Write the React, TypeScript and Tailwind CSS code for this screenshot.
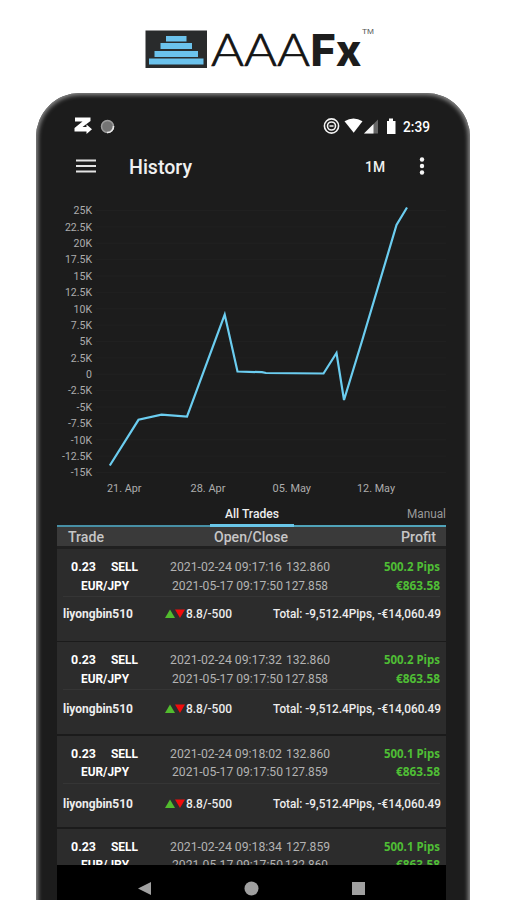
import type { ReactNode } from "react";

type Trade = {
  opened: string;
  openPrice: string;
  closed: string;
  closePrice: string;
  pips: string;
  footerClass: string;
};

const TRADES: Trade[] = [
  { opened: "2021-02-24 09:17:16", openPrice: "132.860", closed: "2021-05-17 09:17:50", closePrice: "127.858", pips: "500.2 Pips", footerClass: "pt-[9px]" },
  { opened: "2021-02-24 09:17:32", openPrice: "132.860", closed: "2021-05-17 09:17:50", closePrice: "127.858", pips: "500.2 Pips", footerClass: "pt-[11px]" },
  { opened: "2021-02-24 09:18:02", openPrice: "132.860", closed: "2021-05-17 09:17:50", closePrice: "127.859", pips: "500.1 Pips", footerClass: "pt-[12px]" },
  { opened: "2021-02-24 09:18:34", openPrice: "127.859", closed: "2021-05-17 09:17:50", closePrice: "132.860", pips: "500.1 Pips", footerClass: "pt-[12px]" },
];

const Y_LABELS = ["25K", "22.5K", "20K", "17.5K", "15K", "12.5K", "10K", "7.5K", "5K", "2.5K", "0", "-2.5K", "-5K", "-7.5K", "-10K", "-12.5K", "-15K"];

const X_LABELS = [
  { x: 107, width: 34.5, label: "21. Apr" },
  { x: 190.5, width: 35, label: "28. Apr" },
  { x: 272.5, width: 38.5, label: "05. May" },
  { x: 357, width: 38, label: "12. May" },
];

// Single line of text stretched or squeezed to a known width.
function Fit({ width, className = "", children }: { width: number; className?: string; children: ReactNode }) {
  return (
    <svg width={width} height="16" className={`shrink-0 overflow-visible fill-current ${className}`}>
      <text x="0" y="12" textLength={width} lengthAdjust="spacingAndGlyphs">
        {children}
      </text>
    </svg>
  );
}

function Logo() {
  return (
    <svg width="506" height="93" viewBox="0 0 506 93" className="block shrink-0">
      <rect x="145.5" y="30.5" width="61.5" height="37.5" fill="#292b2c" />
      <g fill="#6bc2ec">
        <rect x="166" y="36" width="20.5" height="5.5" />
        <rect x="160.5" y="43" width="31.5" height="6" />
        <rect x="154.5" y="51" width="43.5" height="6" />
        <rect x="149" y="58.5" width="54.5" height="6" />
      </g>
      <text x="211" y="66" textLength="99" lengthAdjust="spacingAndGlyphs" fill="#141414" className="font-['Lato'] text-[45px] font-light" stroke="#141414" strokeWidth="0.7">
        AAA
      </text>
      <text x="310.5" y="66" textLength="51" lengthAdjust="spacingAndGlyphs" fill="#1d1d1d" className="font-['Inter'] text-[44px] font-extrabold">
        Fx
      </text>
      <text x="362" y="34" textLength="12" lengthAdjust="spacingAndGlyphs" fill="#555" className="font-['Liberation_Sans'] text-[8px]">
        TM
      </text>
    </svg>
  );
}

function StatusBar() {
  return (
    <div className="flex h-[20px] shrink-0 items-center pl-[16px]">
      <svg width="42" height="20" viewBox="0 0 42 20" className="shrink-0">
        <path d="M2 1.500H17.500V5L9.500 11H13.500V8.500L19 13.200L13.500 18V15.500H1.500V12L9.500 5.500H2Z" fill="#fff" />
        <circle cx="34.5" cy="10.5" r="6" fill="#747474" stroke="#9d9d9d" strokeWidth="1.5" />
        <path d="M34 16.500A6 6 0 0 0 40.500 10" fill="none" stroke="#e8e8e8" strokeWidth="1.6" />
      </svg>
      <svg width="76" height="20" viewBox="323 116 76 20" className="ml-[208px] shrink-0">
        <g fill="none" stroke="#f2f2f2" strokeWidth="1.6">
          <circle cx="331.5" cy="126" r="7.1" />
          <circle cx="331.5" cy="126" r="4" />
          <path d="M329.500 126H333.500" />
        </g>
        <path d="M344.500 121.300Q353.500 115.500 362.500 121.300L353.700 132.800Z" fill="#fff" />
        <path d="M364 133.500L378 119.500V133.500Z" fill="#666" />
        <path d="M364 133.500L373.500 124V133.500Z" fill="#f5f5f5" />
        <path d="M387 121H389V118.500H393V121H395.500V134H387Z" fill="#fff" />
      </svg>
      <Fit width={27} className="ml-[4px] mt-[3px] font-['Roboto'] text-[14px] font-medium text-white">
        2:39
      </Fit>
    </div>
  );
}

function AppBar() {
  return (
    <div className="flex h-[60px] shrink-0 items-center pl-[18.500px] text-[#f0f0f0]">
      <svg width="20" height="16" viewBox="0 0 20 16">
        <path d="M0 2.500H20M0 8H20M0 13.500H20" stroke="#e4e4e4" strokeWidth="2" />
      </svg>
      <Fit width={63} className="ml-[33px] mt-[7px] font-['Roboto'] text-[20px] font-medium">
        History
      </Fit>
      <Fit width={20} className="ml-[173.500px] mt-[3px] font-['Roboto'] text-[14px] font-medium">
        1M
      </Fit>
      <svg width="6" height="20" viewBox="0 0 6 20" fill="#f5f5f5" className="ml-[34px]">
        <circle cx="3" cy="3.5" r="2.2" />
        <circle cx="3" cy="10" r="2.2" />
        <circle cx="3" cy="16.5" r="2.2" />
      </svg>
    </div>
  );
}

function Chart() {
  return (
    <svg width="389" height="306" viewBox="57 196 389 306" className="block shrink-0 font-['Roboto']">
      {Y_LABELS.map((label, i) => (
        <g key={label}>
          <path d={`M96 ${210.5 + i * 16.375}H446`} stroke="#202020" />
          <text x="92" y={214.3 + i * 16.375} textAnchor="end" fill="#adadad" className="text-[10.500px]">
            {label}
          </text>
        </g>
      ))}
      <path
        d="M109.800 465.500L138.500 419.800L161.500 414.700L187 416.600L224.700 314.500L237.500 371.500L262 372.200L266 373L323.500 373.500L336.500 353L344 400L362 341L396.500 225L407 207.500"
        fill="none"
        stroke="#6bcdf0"
        strokeWidth="2.2"
      />
      {X_LABELS.map((tick) => (
        <text key={tick.label} x={tick.x} y="491.5" textLength={tick.width} lengthAdjust="spacingAndGlyphs" fill="#adadad" className="text-[10.500px]">
          {tick.label}
        </text>
      ))}
    </svg>
  );
}

function Tabs() {
  return (
    <div className="flex h-[25px] shrink-0 font-['Roboto'] text-[12px]">
      <div className="w-[153px] border-b-2 border-[#478fa5]" />
      <div className="w-[84px] border-b-[3px] border-[#69c6e8] pl-[15px] pt-[4px]">
        <Fit width={54} className="font-medium text-[#ededed]">
          All Trades
        </Fit>
      </div>
      <div className="w-[152px] border-b-2 border-[#50a3b9] pl-[112.500px] pt-[4px]">
        <Fit width={39} className="text-[#999]">
          Manual
        </Fit>
      </div>
    </div>
  );
}

function TradeRow({ trade }: { trade: Trade }) {
  return (
    <div className="mb-[1.750px] h-[91.500px] bg-[#2c2c2c] pt-[10px] font-['Roboto']">
      <div className="flex h-[18.500px] text-[12px] text-[#b3b3b3]">
        <Fit width={25} className="ml-[14px] font-bold text-white">0.23</Fit>
        <Fit width={27} className="ml-[15px] font-bold text-white">SELL</Fit>
        <Fit width={112} className="ml-[32px]">{trade.opened}</Fit>
        <Fit width={44} className="ml-[4px]">{trade.openPrice}</Fit>
        <Fit width={56} className="ml-auto mr-[6px] font-['Open_Sans'] font-bold text-[#4fbe35]">{trade.pips}</Fit>
      </div>
      <div className="flex h-[18.500px] text-[12px] text-[#b3b3b3]">
        <Fit width={48} className="ml-[24px] font-bold text-white">EUR/JPY</Fit>
        <Fit width={111} className="ml-[43px]">{trade.closed}</Fit>
        <Fit width={43} className="ml-[2px]">{trade.closePrice}</Fit>
        <Fit width={44} className="ml-auto mr-[6px] font-['Open_Sans'] font-bold text-[#4fbe35]">€863.58</Fit>
      </div>
      <div className="mx-[6px] h-px bg-[#353535]" />
      <div className={`flex text-[12px] text-[#ededed] ${trade.footerClass}`}>
        <Fit width={70} className="ml-[5.500px] font-bold">liyongbin510</Fit>
        <svg width="20" height="16" viewBox="0 0 20 16" className="ml-[32px]">
          <path d="M5 3.500L10 12H0Z" fill="#52bc2e" />
          <path d="M10 3.500H20L15 12Z" fill="#f00c0c" />
        </svg>
        <Fit width={46} className="ml-[1.500px] font-medium">8.8/-500</Fit>
        <Fit width={168} className="ml-auto mr-[5.500px] font-medium">Total: -9,512.4Pips, -€14,060.49</Fit>
      </div>
    </div>
  );
}

function NavBar() {
  return (
    <div className="flex h-[35px] shrink-0 items-center bg-black pt-[11px]">
      <svg width="389" height="16" viewBox="57 880 389 16" fill="#a0a0a0">
        <path d="M151 882V895L138 888.500Z" />
        <circle cx="251.5" cy="888.5" r="7" />
        <rect x="352" y="882" width="13" height="13" />
      </svg>
    </div>
  );
}

export default function App() {
  return (
    <div className="flex h-[900px] w-[506px] flex-col overflow-hidden bg-white">
      <Logo />
      <div className="-mb-3 ml-[36px] flex h-[819px] w-[434px] shrink-0 flex-col overflow-hidden rounded-t-[44px] bg-[#1c1c1c] pb-3 pl-[21px] pr-[24px] pt-[23px] shadow-[inset_0_0_4px_2px_#8c8c8c]">
        <StatusBar />
        <AppBar />
        <Chart />
        <Tabs />
        <div className="flex h-[22px] shrink-0 border-b-[3px] border-[#202020] bg-[#3a3a3a] font-['Roboto'] text-[14px] font-medium text-[#c6c6c6]">
          <Fit width={36} className="ml-[11px] mt-[3px]">Trade</Fit>
          <Fit width={74} className="ml-[110px] mt-[3px]">Open/Close</Fit>
          <Fit width={35} className="ml-auto mr-[10px] mt-[3px]">Profit</Fit>
        </div>
        <div className="min-h-0 flex-1 overflow-hidden bg-[#1b1b1b]">
          {TRADES.map((trade) => (
            <TradeRow key={trade.opened} trade={trade} />
          ))}
        </div>
        <NavBar />
      </div>
    </div>
  );
}
